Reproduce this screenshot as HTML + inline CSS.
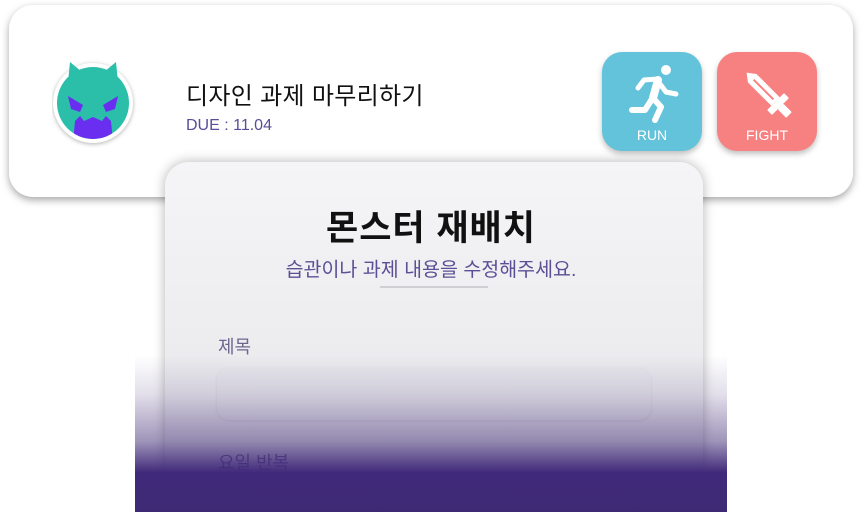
<!DOCTYPE html>
<html><head><meta charset="utf-8"><style>
*{margin:0;padding:0;box-sizing:border-box}
body{width:862px;height:512px;background:#fff;position:relative;overflow:hidden;font-family:"Liberation Sans","Noto Sans CJK KR",sans-serif}
.card{position:absolute;left:9px;top:5px;width:844px;height:192px;background:#fff;border-radius:24px;box-shadow:0 3px 8px rgba(0,0,0,.35)}
.title{position:absolute;left:186px;top:76px;font-size:24px;color:#111;letter-spacing:.3px}
.due{position:absolute;left:186px;top:117px;font-size:16px;color:#5a4c96}
.btn{position:absolute;top:52px;width:100px;height:99px;border-radius:20px;box-shadow:0 3px 6px rgba(0,0,0,.25);color:#fff;font-size:14px;text-align:center}
.btn span{position:absolute;left:0;right:0;top:75px}
.btn svg{position:absolute;left:0;top:0}
.modal{position:absolute;left:165px;top:162px;width:538px;height:330px;border-radius:24px;background:linear-gradient(#f5f5f7,#e6e6e9);box-shadow:0 0 12px rgba(0,0,0,.3)}
.mt{position:absolute;left:0;right:0;top:200px;text-align:center;font-size:35px;font-weight:bold;color:#111;letter-spacing:1px}
.ms{position:absolute;left:0;right:0;top:253px;text-align:center;font-size:19.5px;color:#5d4f96}
.line{position:absolute;left:380px;top:286px;width:108px;height:2px;background:#cfcfd3}
.lab{position:absolute;left:218px;font-size:18px;color:#6e6690}
.input{position:absolute;left:217px;top:368px;width:434px;height:52px;border-radius:12px;background:#e9e9ec;box-shadow:0 1px 3px rgba(0,0,0,.08)}
.fade{position:absolute;left:135px;top:355px;width:592px;height:157px;background:linear-gradient(rgba(63,42,116,0) 0%,rgba(63,42,116,.15) 25%,rgba(63,42,116,.5) 55%,#40297a 75%,#3e2a74 100%)}
</style></head><body>
<div class="card"></div>
<svg style="position:absolute;left:52px;top:58px" width="90" height="90" viewBox="0 0 90 90">
<defs><clipPath id="c"><circle cx="41" cy="45" r="36"/></clipPath></defs>
<circle cx="41" cy="45" r="40" fill="#fff" style="filter:drop-shadow(0 1px 2px rgba(0,0,0,.3))"/>
<path d="M16 24 L18 4 L30 14 L52 14 L64 4 L66 24 Z" fill="#2bbfaa"/>
<circle cx="41" cy="45" r="36" fill="#2bbfaa"/>
<path d="M16 38 L31 47 L28 54 L19 51 Z M66 38 L51 47 L54 54 L63 51 Z" fill="#6a2ef0"/>
<path d="M21 84 L23 63 L28 58 L32 63 L41 59 L50 63 L54 58 L59 63 L61 84 Z" fill="#6a2ef0" clip-path="url(#c)"/>
</svg>
<div class="title">디자인 과제 마무리하기</div>
<div class="due">DUE : 11.04</div>
<div class="btn" style="left:602px;background:#63c3da">
<svg width="100" height="99" viewBox="0 0 100 99" fill="none" stroke="#fff" stroke-linecap="round" stroke-linejoin="round">
<circle cx="64" cy="18" r="5" fill="#fff" stroke="none"/>
<path d="M56 28 L51 46" stroke-width="8"/>
<path d="M56 27 L42 28 L36 36" stroke-width="5"/>
<path d="M58 32 L64 40 L74 42" stroke-width="5"/>
<path d="M51 46 L59 55 L53 68" stroke-width="6"/>
<path d="M50 47 L43 58 L30 58" stroke-width="6"/>
</svg><span>RUN</span></div>
<div class="btn" style="left:717px;background:#f78181">
<svg width="100" height="99" viewBox="0 0 100 99">
<g transform="translate(72,63) rotate(-45)" fill="#fff">
<path d="M0 -60 L6 -52 L6 -19 L-6 -19 L-6 -52 Z"/>
<path d="M0 -50 L0 -22" stroke="#f78181" stroke-width="2"/>
<rect x="-12" y="-19" width="24" height="7" rx="1"/>
<rect x="-4" y="-12" width="8" height="12" rx="1"/>
</g>
</svg><span>FIGHT</span></div>
<div class="modal"></div>
<div class="mt">몬스터 재배치</div>
<div class="ms">습관이나 과제 내용을 수정해주세요.</div>
<div class="line"></div>
<div class="lab" style="top:333px">제목</div>
<div class="input"></div>
<div class="lab" style="top:449px">요일 반복</div>
<div class="fade"></div>
</body></html>
